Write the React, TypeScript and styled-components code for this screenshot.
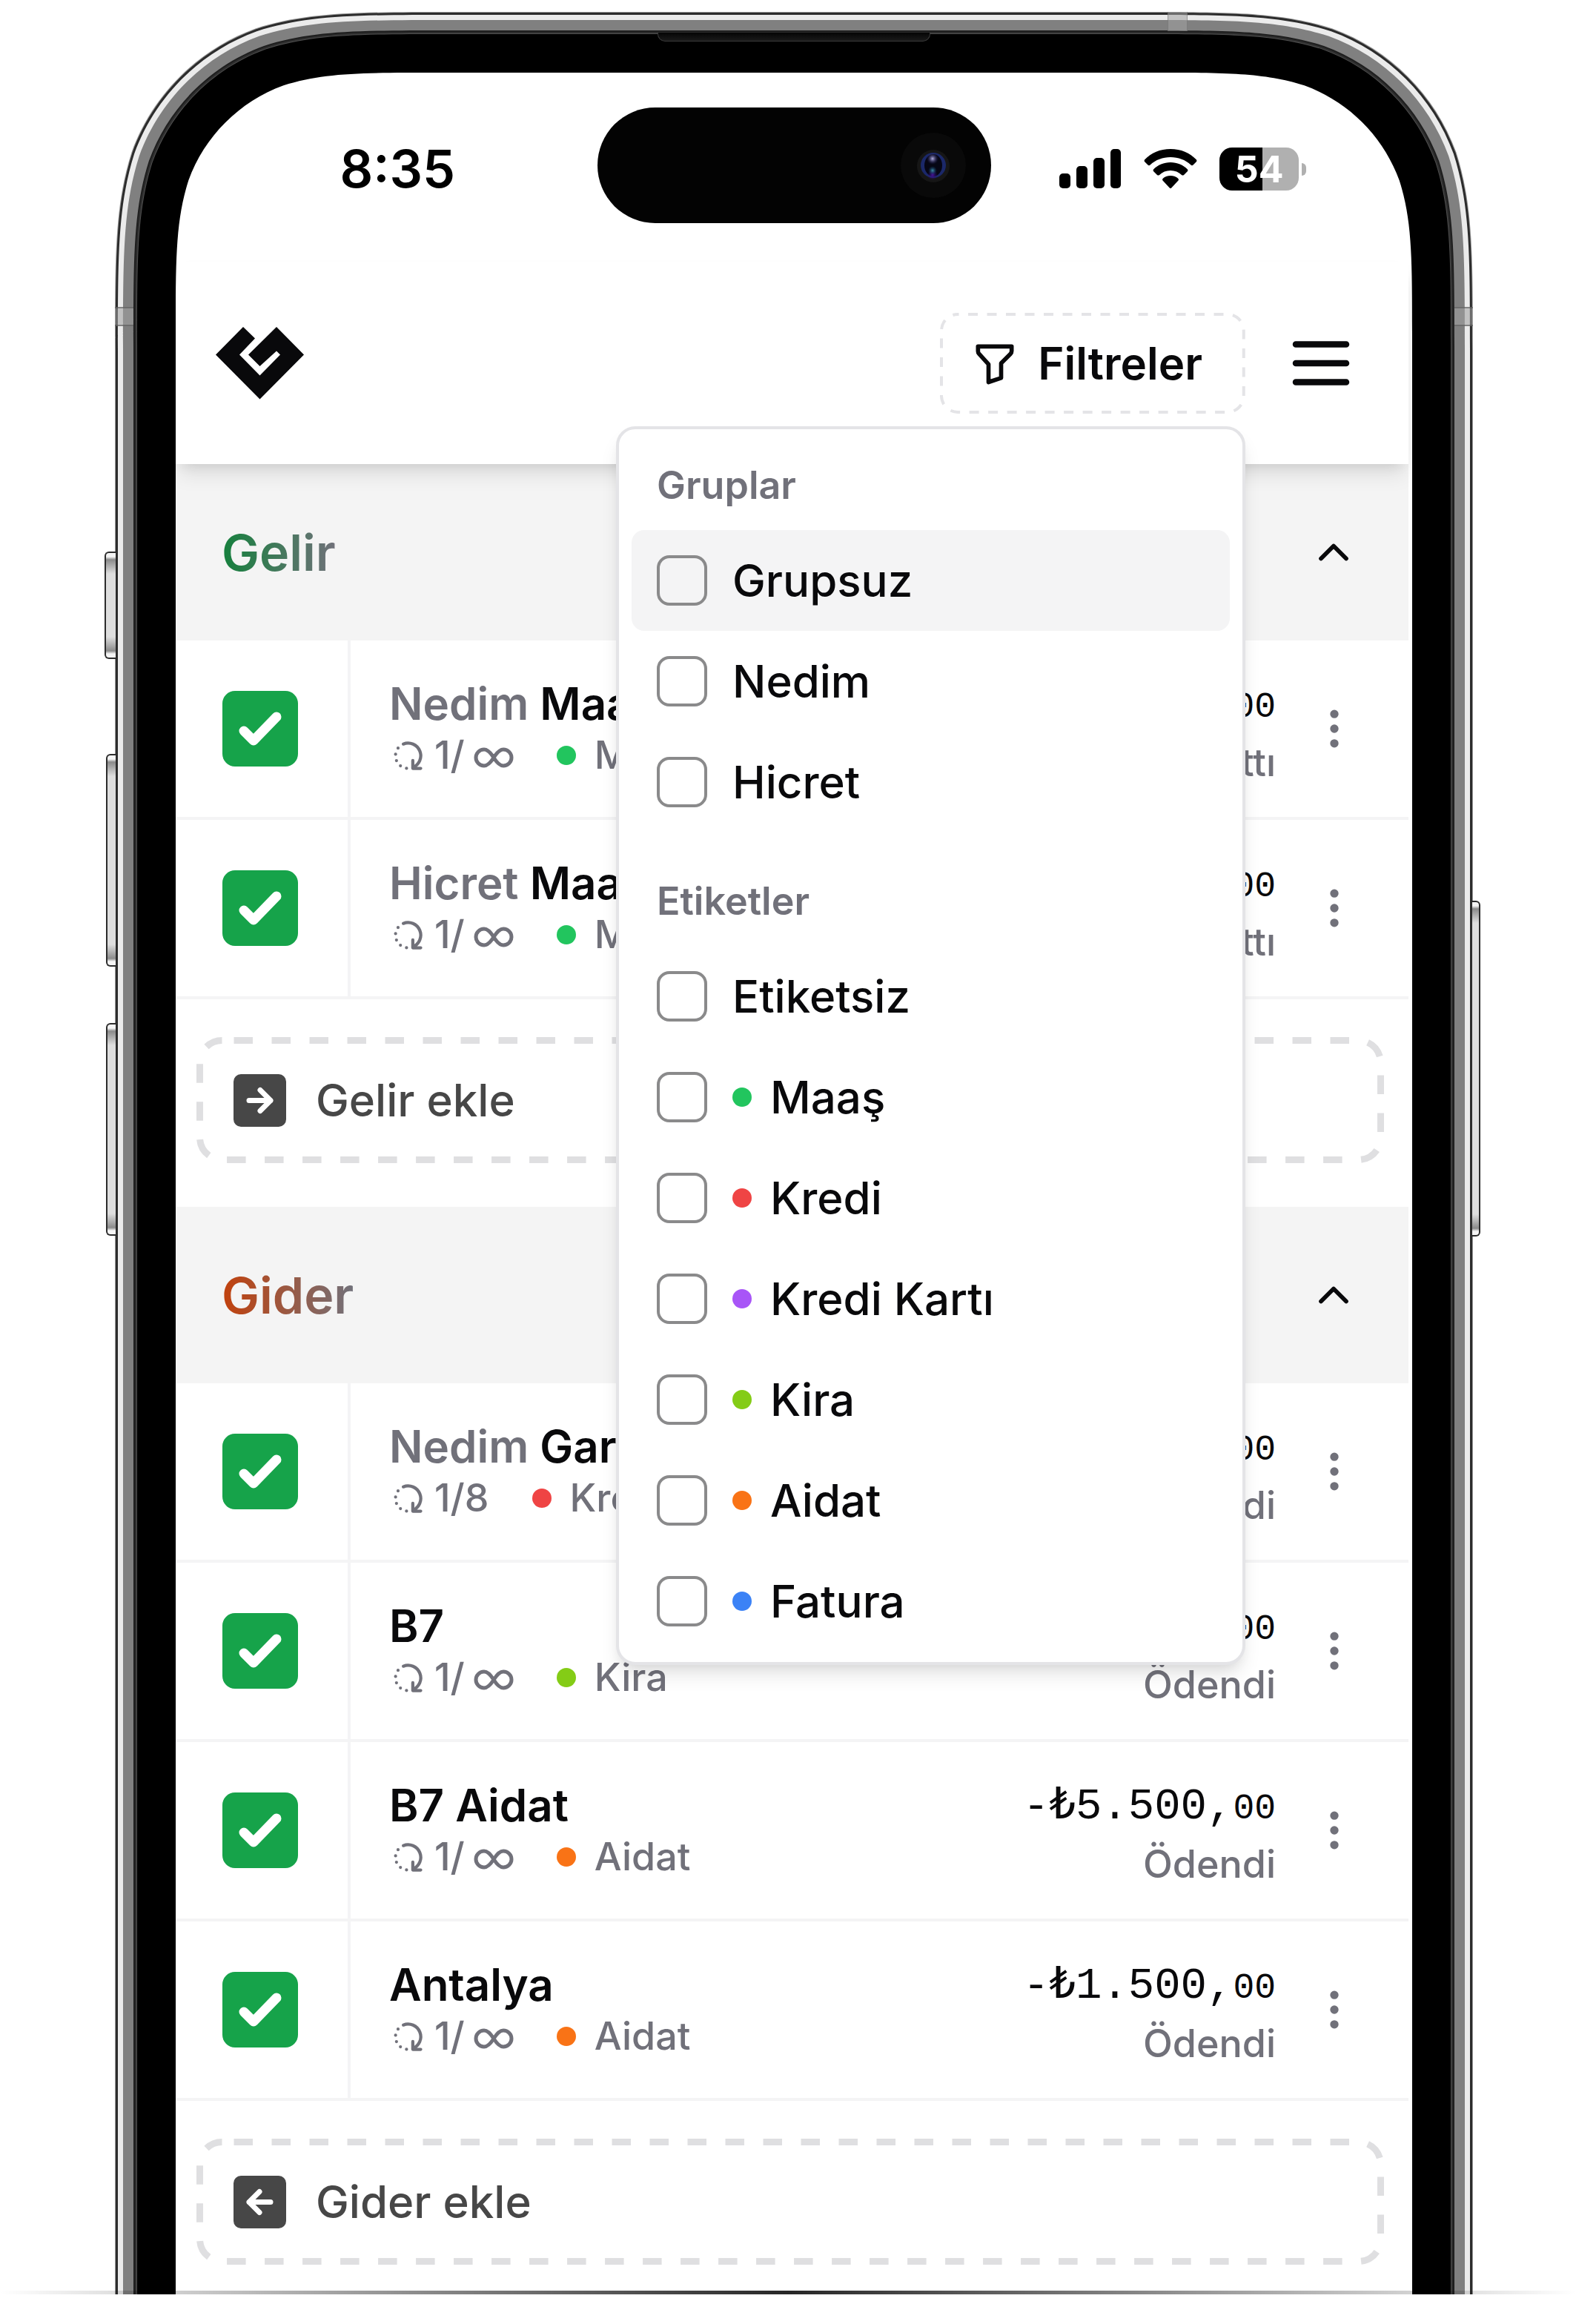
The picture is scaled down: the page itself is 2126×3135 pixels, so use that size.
import React, { useId, useState } from "react";
import styled, { createGlobalStyle } from "styled-components";

const sans = `Inter, "Noto Sans", sans-serif`;
const mono = `"Liberation Mono", "DejaVu Sans Mono", monospace`;
const ink = "#09090b";
const muted = "#71717a";
const line = "#f4f4f5";

const GlobalStyle = createGlobalStyle`
  *, *::before, *::after { box-sizing: border-box; }
  body { margin: 0; background: #fff; font-family: ${sans}; color: ${ink}; }
  button { font: inherit; color: inherit; background: none; border: 0; padding: 0; cursor: pointer; }
  h2, h3, ul, p { margin: 0; padding: 0; list-style: none; font: inherit; }
  svg { display: block; flex: none; }
`;

/* ---------- device ---------- */

/* Bezel rings: distance from the outer edge and colour, outermost first. */
const rings: [number, string][] = [
  [0, "#9a9a9a"],
  [1, "#2c2c2c"],
  [4, "#ebebeb"],
  [11, "#808080"],
  [25, "#1e1e1e"],
  [27, "#2e2e2e"],
  [29, "#505050"],
  [30, "#000"],
];
const bezel = 82;

const Stage = styled.main`
  position: relative;
  overflow: hidden;
  padding: 16px 139px 0 155px;
`;

const Phone = styled.div`
  position: relative;
  margin-bottom: -82px;
  padding: ${bezel}px;
  background: #000;
  box-shadow: ${rings
    .slice(0, -1)
    .map(([, color], i) => `inset 0 0 0 ${rings[i + 1][0]}px ${color}`)
    .join(", ")};
`;

const CornerArt = styled.svg<{ $side: "left" | "right" }>`
  position: absolute;
  top: 0;
  ${(p) => p.$side}: 0;
  transform: scaleX(${(p) => (p.$side === "left" ? 1 : -1)});
  pointer-events: none;
`;

const SideKey = styled.span<{ $side: "left" | "right"; $top: number; $height: number; $depth: number }>`
  position: absolute;
  top: ${(p) => p.$top}px;
  height: ${(p) => p.$height}px;
  width: ${(p) => p.$depth}px;
  ${(p) => p.$side}: ${(p) => -p.$depth + 1}px;
  border: 2px solid #2c2c2c;
  border-${(p) => (p.$side === "left" ? "right" : "left")}: 0;
  border-radius: ${(p) => (p.$side === "left" ? "6px 0 0 6px" : "0 6px 6px 0")};
  background: linear-gradient(#f5f5f5, #f5f5f5 5px, #8a8a8a 9px, #dedede 28px, #dedede calc(100% - 28px), #8a8a8a calc(100% - 9px), #f5f5f5 calc(100% - 5px));
`;

const Antenna = styled.span<{ $at: "left" | "right" | "top" }>`
  position: absolute;
  background: rgba(160, 160, 160, 0.55);
  ${(p) =>
    p.$at === "top"
      ? "top: 0; right: 385px; width: 27px; height: 26px; border: solid rgba(90,90,90,.4); border-width: 0 1px;"
      : `top: 398px; ${p.$at}: 0; width: 25px; height: 26px; border: solid rgba(70,70,70,.5); border-width: 2px 0;`}
`;

const Earpiece = styled.span`
  position: absolute;
  top: 28px;
  left: 50%;
  width: 368px;
  height: 12px;
  margin-left: -184px;
  background: linear-gradient(#050505, #1a1a1a);
  border: solid #3a3a3a;
  border-width: 0 1px 1px;
  border-radius: 0 0 10px 10px;
`;

const Screen = styled.div`
  position: relative;
  z-index: 0;
  overflow: hidden;
  background: #fff;
  padding: 0 5px 40px 0;
`;

const Ground = styled.div`
  position: absolute;
  left: 0;
  right: 0;
  bottom: 0;
  height: 5px;
  background: linear-gradient(90deg, rgba(0, 0, 0, 0), rgba(0, 0, 0, 0.85) 50%, rgba(0, 0, 0, 0));
`;

/* ---------- status bar ---------- */

const StatusBar = styled.div`
  display: grid;
  grid-template-columns: 1fr 531px 1fr;
  align-items: center;
  height: 256px;
  padding-top: 4px;
  margin-right: -5px;
`;

const Clock = styled.time`
  padding-left: 30px;
  text-align: center;
  font-size: 70px;
  font-weight: 600;
  line-height: 84px;
  color: #000;
`;

const Island = styled.div`
  display: flex;
  align-items: center;
  justify-content: flex-end;
  height: 156px;
  margin-bottom: 10px;
  padding-right: 34px;
  border-radius: 78px;
  background: #030303;
`;

const StatusIcons = styled.div`
  display: flex;
  align-items: center;
  justify-content: center;
  gap: 30px;
  padding-right: 50px;
`;

const Battery = styled.div`
  display: flex;
  align-items: center;
  gap: 4px;
`;

const BatteryBody = styled.span`
  width: 107px;
  height: 58px;
  border-radius: 17px;
  background: linear-gradient(90deg, #000 54%, #b0b0b0 54%);
  color: #fff;
  font-size: 50px;
  font-weight: 700;
  line-height: 58px;
  text-align: center;
`;

const BatteryCap = styled.span`
  width: 6px;
  height: 17px;
  border-radius: 0 8px 8px 0;
  background: #b0b0b0;
`;

/* ---------- header ---------- */

const Header = styled.header`
  position: relative;
  z-index: 2;
  display: flex;
  align-items: center;
  justify-content: space-between;
  padding: 68px 67px 68px 54px;
  background: #fff;
  box-shadow: 0 17px 26px -4px rgba(0, 0, 0, 0.1), 0 9px 17px -9px rgba(0, 0, 0, 0.1);
`;

const HeaderActions = styled.div`
  display: flex;
  align-items: center;
  gap: 51px;
`;

const FilterAnchor = styled.div`
  position: relative;
`;

const DashedButton = styled.button`
  position: relative;
  display: flex;
  align-items: center;
`;

const FilterButton = styled(DashedButton)`
  gap: 24px;
  height: 136px;
  padding: 0 58px 0 40px;
  font-size: 60px;
  font-weight: 600;
  line-height: 68px;
`;

const DashFrame = styled.svg<{ $weight: number }>`
  position: absolute;
  inset: 0;
  width: 100%;
  height: 100%;
  rect {
    x: ${(p) => p.$weight / 2}px;
    y: ${(p) => p.$weight / 2}px;
    width: calc(100% - ${(p) => p.$weight}px);
    height: calc(100% - ${(p) => p.$weight}px);
    fill: none;
    stroke-width: ${(p) => p.$weight}px;
  }
`;

const Popover = styled.div`
  position: absolute;
  top: calc(100% + 17px);
  right: 0;
  width: 849px;
  padding: 17px 17px 14px;
  border: 4px solid #e4e4e7;
  border-radius: 26px;
  background: #fff;
  box-shadow: 0 17px 26px -4px rgba(0, 0, 0, 0.1), 0 9px 17px -9px rgba(0, 0, 0, 0.1);
`;

const FilterGroup = styled.div`
  & + & {
    margin-top: 34px;
  }
`;

const GroupTitle = styled.h3`
  padding: 25px 34px 26px;
  font-size: 52px;
  font-weight: 600;
  line-height: 68px;
  color: ${muted};
`;

const FilterOption = styled.label<{ $active?: boolean }>`
  display: flex;
  align-items: center;
  gap: 34px;
  height: 136px;
  padding: 0 34px;
  border-radius: 17px;
  background: ${(p) => (p.$active ? "#f4f4f5" : "transparent")};
  font-size: 60px;
  font-weight: 500;
  line-height: 68px;
`;

const OptionBox = styled.input`
  appearance: none;
  flex: none;
  width: 68px;
  height: 68px;
  margin: 0;
  border: 4px solid #8a8a8b;
  border-radius: 17px;
  &:checked {
    background: #16a34a;
    border-color: #16a34a;
  }
`;

const OptionName = styled.span`
  display: flex;
  align-items: center;
  gap: 25px;
`;

const Dot = styled.span<{ $color: string }>`
  flex: none;
  width: 26px;
  height: 26px;
  border-radius: 50%;
  background: ${(p) => p.$color};
`;

/* ---------- ledger ---------- */

const SectionHead = styled.div`
  display: flex;
  align-items: center;
  justify-content: space-between;
  height: 238px;
  padding: 0 67px 0 62px;
  background: #f4f4f4;
`;

const SectionTitle = styled.h2<{ $from: string }>`
  font-size: 68px;
  font-weight: 600;
  line-height: 84px;
  color: transparent;
  background: linear-gradient(90deg, ${(p) => p.$from}, ${muted});
  background-clip: text;
  -webkit-background-clip: text;
`;

const Row = styled.li`
  display: grid;
  grid-template-columns: 236px 1fr auto 179px;
  height: 242px;
  border-bottom: 4px solid ${line};
`;

const DoneCell = styled.label`
  position: relative;
  display: flex;
  align-items: center;
  padding-left: 63px;
  border-right: 4px solid ${line};
  svg {
    position: absolute;
    pointer-events: none;
  }
`;

const DoneBox = styled.input`
  appearance: none;
  width: 102px;
  height: 102px;
  margin: 0;
  border-radius: 17px;
  border: 4px solid #8a8a8b;
  &:checked {
    background: #16a34a;
    border: 0;
  }
`;

const Details = styled.div`
  display: flex;
  flex-direction: column;
  justify-content: center;
  padding: 4px 0 0 52px;
  white-space: nowrap;
`;

const Name = styled.p`
  font-size: 60px;
  font-weight: 600;
  line-height: 68px;
`;

const Owner = styled.span`
  color: ${muted};
`;

const Meta = styled.p`
  display: flex;
  align-items: center;
  font-size: 52px;
  font-weight: 500;
  line-height: 72px;
  color: ${muted};
`;

const Count = styled.span`
  display: flex;
  align-items: center;
  gap: 12px;
  margin: 0 58px 0 10px;
`;

const Tag = styled.span`
  display: flex;
  align-items: center;
  gap: 25px;
`;

const Amount = styled.div`
  padding-top: 50px;
  text-align: right;
`;

const Price = styled.p`
  font-family: ${mono};
  font-size: 59px;
  line-height: 76px;
`;

const Cents = styled.span`
  font-size: 48px;
`;

const State = styled.p`
  font-size: 52px;
  font-weight: 500;
  line-height: 74px;
  color: ${muted};
`;

const MoreButton = styled.button`
  display: flex;
  align-items: center;
  justify-content: center;
  padding-right: 22px;
  color: ${muted};
`;

const AddArea = styled.div`
  padding: 51px 33px 59px 28px;
  &:last-child {
    padding-bottom: 0;
  }
`;

const AddButton = styled(DashedButton)`
  gap: 40px;
  width: 100%;
  height: 170px;
  padding: 0 50px;
  font-size: 60px;
  font-weight: 500;
  line-height: 68px;
  color: #474747;
`;

/* ---------- drawings ---------- */

/* Outline of one continuous-curvature corner, inset by d from the phone's outer edge. */
const cornerSize = 475;
const cornerPath = (d: number) => {
  const r = 300 - d * 0.85;
  const p = (x: number, y: number) => `${(d + x * r).toFixed(2)} ${(d + y * r).toFixed(2)}`;
  return [
    `M${d} ${cornerSize}L${p(0, 1.528665)}`,
    `C${p(0, 1.088493)} ${p(0, 0.868407)} ${p(0.074911, 0.631494)}`,
    `C${p(0.169060, 0.372824)} ${p(0.372824, 0.169060)} ${p(0.631494, 0.074911)}`,
    `C${p(0.868407, 0)} ${p(1.088493, 0)} ${p(1.528665, 0)}`,
    `L${cornerSize} ${d}V${cornerSize}Z`,
  ].join("");
};

const Corner = ({ side }: { side: "left" | "right" }) => (
  <CornerArt $side={side} width={cornerSize} height={cornerSize} viewBox={`0 0 ${cornerSize} ${cornerSize}`} aria-hidden="true">
    <path fillRule="evenodd" fill="#fff" d={`M0 0H${cornerSize}V${cornerSize}H0Z${cornerPath(2)}`} />
    {rings.map(([d, color], i) => {
      const inner = i + 1 < rings.length ? rings[i + 1][0] + 2 : bezel;
      return <path key={d} fillRule="evenodd" fill={color} d={cornerPath(d) + cornerPath(inner)} />;
    })}
  </CornerArt>
);

const Stroke = ({ size, children, width = 2 }: { size: number; children: React.ReactNode; width?: number }) => (
  <svg width={size} height={size} viewBox="0 0 24 24" fill="none" stroke="currentColor" strokeWidth={width} strokeLinecap="round" strokeLinejoin="round" aria-hidden="true">
    {children}
  </svg>
);

const Logo = () => (
  <svg width="119" height="98" viewBox="0 0 119 98" aria-label="Logo" role="img">
    <path fill={ink} d="M0 37.5 37 0 53 15.5 32 37.5 59.5 65.5 87 37.5 82 32.5 59.5 53 44 37.5 82 0 119 37.5 59.5 97.5Z" />
  </svg>
);

const Camera = () => (
  <svg width="88" height="88" viewBox="0 0 88 88" aria-hidden="true">
    <defs>
      <radialGradient id="glint"><stop offset="0" stopColor="#b9b6e6" /><stop offset="1" stopColor="#1d1a63" stopOpacity="0" /></radialGradient>
      <radialGradient id="teal"><stop offset="0" stopColor="#3f8fae" /><stop offset="1" stopColor="#0d3a66" stopOpacity="0" /></radialGradient>
      <radialGradient id="violet"><stop offset="0" stopColor="#4a14a0" /><stop offset="1" stopColor="#2a0a66" stopOpacity="0" /></radialGradient>
    </defs>
    <circle cx="44" cy="44" r="44" fill="#090909" />
    <circle cx="44" cy="45" r="22" fill="#161616" />
    <circle cx="44" cy="44" r="17" fill="#1b2869" />
    <ellipse cx="44" cy="44" rx="12" ry="15" fill="#060614" />
    <circle cx="43" cy="35" r="8" fill="url(#glint)" />
    <circle cx="43" cy="57" r="7" fill="url(#violet)" />
    <circle cx="43" cy="51" r="6" fill="url(#teal)" />
  </svg>
);

const Signal = () => (
  <svg width="84" height="54" viewBox="0 0 84 54" aria-hidden="true">
    <rect x="0" y="33" width="15" height="20" rx="5" />
    <rect x="23" y="23" width="15" height="30" rx="5" />
    <rect x="46" y="12" width="15" height="41" rx="5" />
    <rect x="69" y="0" width="14" height="53" rx="5" />
  </svg>
);

const Wifi = () => (
  <svg width="72" height="54" viewBox="0 0 72 54" aria-hidden="true">
    <path d="M36 0C50 0 62 5 71 14.500Q72 16 71 17L66.500 21.500Q65 23 63.500 21.500C56 14.500 46.500 11 36 11S16 14.500 8.500 21.500Q7 23 5.500 21.500L1 17Q0 16 1 14.500C10 5 22 0 36 0Z" />
    <path d="M36 18C45 18 53 21.500 59 27.500Q60 29 59 30L54 35Q52.500 36 51 35C47 31 42 29 36 29S25 31 21 35Q19.500 36 18 35L13 30Q12 29 13 27.500C19 21.500 27 18 36 18Z" />
    <path d="M36 36C40 36 44 37.500 46.500 40Q47.500 41.500 46.500 42.500L37.200 52.500Q36 53.500 34.800 52.500L25.500 42.500Q24.500 41.500 25.500 40C28 37.500 32 36 36 36Z" />
  </svg>
);

const FilterIcon = () => (
  <Stroke size={68}>
    <path d="M4 4h16v2.172a2 2 0 0 1 -.586 1.414l-4.414 4.414v7l-6 2v-8.5l-4.480 -4.928a2 2 0 0 1 -.520 -1.345v-2.227z" />
  </Stroke>
);

const RepeatIcon = () => (
  <Stroke size={51}>
    <path d="M9 4.550a8 8 0 0 1 6 14.900m0 -4.450v5h5" />
    <path d="M5.630 7.160v.010M4.060 11v.010M4.630 15.100v.010M7.160 18.370v.010M11 19.940v.010" />
  </Stroke>
);

const InfinityIcon = () => (
  <svg width="54" height="34" viewBox="0 0 54 34" fill="none" stroke="currentColor" strokeWidth="5" aria-label="sonsuz" role="img">
    <path d="M27 20C22 12 18 9 14 9a11 11 0 0 0 0 22C18 31 22 28 27 20S36 9 40 9a11 11 0 0 1 0 22C36 31 32 28 27 20Z" />
  </svg>
);

const CheckMark = () => (
  <svg width="102" height="102" viewBox="0 0 102 102" fill="none" stroke="#fff" strokeWidth="13" strokeLinecap="round" strokeLinejoin="round" aria-hidden="true">
    <path d="M29 54 42 67 73 35" />
  </svg>
);

const ArrowTile = ({ back }: { back?: boolean }) => (
  <svg width="71" height="71" viewBox="0 0 71 71" aria-hidden="true">
    <rect width="71" height="71" rx="10" fill="#474747" />
    <path d={back ? "M50 35.500H21M35 21.500 21 35.500 35 49.500" : "M21 35.500H50M36 21.500 50 35.500 36 49.500"} fill="none" stroke="#fff" strokeWidth="7" strokeLinecap="round" strokeLinejoin="round" />
  </svg>
);

/* ---------- data ---------- */

const colors: Record<string, string> = {
  Maaş: "#22c55e",
  Kredi: "#ef4444",
  "Kredi Kartı": "#a855f7",
  Kira: "#84cc16",
  Aidat: "#f97316",
  Fatura: "#3b82f6",
};

type Entry = { owner?: string; name: string; total?: number; tag: string; amount: string; state: string };

const income: Entry[] = [
  { owner: "Nedim", name: "Maaş", tag: "Maaş", amount: "₺50.000", state: "Yattı" },
  { owner: "Hicret", name: "Maaş", tag: "Maaş", amount: "₺40.000", state: "Yattı" },
];

const expenses: Entry[] = [
  { owner: "Nedim", name: "Garanti", total: 8, tag: "Kredi", amount: "-₺9.000", state: "Ödendi" },
  { name: "B7", tag: "Kira", amount: "-₺20.000", state: "Ödendi" },
  { name: "B7 Aidat", tag: "Aidat", amount: "-₺5.500", state: "Ödendi" },
  { name: "Antalya", tag: "Aidat", amount: "-₺1.500", state: "Ödendi" },
];

const filters = [
  { title: "Gruplar", options: ["Grupsuz", "Nedim", "Hicret"] },
  { title: "Etiketler", options: ["Etiketsiz", ...Object.keys(colors)] },
];

/* ---------- parts ---------- */

function EntryRow({ entry }: { entry: Entry }) {
  const [done, setDone] = useState(true);
  return (
    <Row>
      <DoneCell>
        <DoneBox type="checkbox" checked={done} onChange={() => setDone(!done)} aria-label={entry.name} />
        {done && <CheckMark />}
      </DoneCell>
      <Details>
        <Name>
          {entry.owner && <Owner>{entry.owner} </Owner>}
          {entry.name}
        </Name>
        <Meta>
          <RepeatIcon />
          <Count>
            {entry.total ? `1/${entry.total}` : <>1/<InfinityIcon /></>}
          </Count>
          <Tag>
            <Dot $color={colors[entry.tag]} />
            {entry.tag}
          </Tag>
        </Meta>
      </Details>
      <Amount>
        <Price>
          {entry.amount},<Cents>00</Cents>
        </Price>
        <State>{entry.state}</State>
      </Amount>
      <MoreButton aria-label="Seçenekler">
        <Stroke size={68}>
          <circle cx="12" cy="5" r="1" />
          <circle cx="12" cy="12" r="1" />
          <circle cx="12" cy="19" r="1" />
        </Stroke>
      </MoreButton>
    </Row>
  );
}

function Section({ title, from, entries, addLabel, back }: { title: string; from: string; entries: Entry[]; addLabel: string; back?: boolean }) {
  return (
    <>
      <SectionHead>
        <SectionTitle $from={from}>{title}</SectionTitle>
        <button aria-label="Daralt">
          <Stroke size={68}>
            <path d="M6 15l6 -6l6 6" />
          </Stroke>
        </button>
      </SectionHead>
      <ul>
        {entries.map((entry, i) => (
          <EntryRow key={i} entry={entry} />
        ))}
      </ul>
      <AddArea>
        <AddButton>
          <DashFrame $weight={9} aria-hidden="true">
            <rect rx="30" stroke="#dfdfe1" strokeDasharray="25.500 25.500" strokeDashoffset="-16" />
          </DashFrame>
          <ArrowTile back={back} />
          {addLabel}
        </AddButton>
      </AddArea>
    </>
  );
}

function FilterMenu() {
  const base = useId();
  return (
    <Popover>
      {filters.map((group) => (
        <FilterGroup key={group.title} role="group" aria-label={group.title}>
          <GroupTitle>{group.title}</GroupTitle>
          {group.options.map((name) => (
            <FilterOption key={name} htmlFor={base + name} $active={name === "Grupsuz"}>
              <OptionBox id={base + name} type="checkbox" />
              <OptionName>
                {colors[name] && <Dot $color={colors[name]} />}
                {name}
              </OptionName>
            </FilterOption>
          ))}
        </FilterGroup>
      ))}
    </Popover>
  );
}

export default function App() {
  return (
    <>
      <GlobalStyle />
      <Stage>
        <Phone>
          <Screen>
            <StatusBar>
              <Clock>8:35</Clock>
              <Island>
                <Camera />
              </Island>
              <StatusIcons>
                <Signal />
                <Wifi />
                <Battery>
                  <BatteryBody>54</BatteryBody>
                  <BatteryCap />
                </Battery>
              </StatusIcons>
            </StatusBar>
            <Header>
              <Logo />
              <HeaderActions>
                <FilterAnchor>
                  <FilterButton aria-expanded="true">
                    <DashFrame $weight={4} aria-hidden="true">
                      <rect rx="22" stroke="#e4e4e7" strokeDasharray="13 12.500" strokeDashoffset="-14" />
                    </DashFrame>
                    <FilterIcon />
                    Filtreler
                  </FilterButton>
                  <FilterMenu />
                </FilterAnchor>
                <button aria-label="Menü">
                  <Stroke size={102}>
                    <path d="M4 6h16M4 12h16M4 18h16" />
                  </Stroke>
                </button>
              </HeaderActions>
            </Header>
            <Section title="Gelir" from="#15803d" entries={income} addLabel="Gelir ekle" />
            <Section title="Gider" from="#c2410c" entries={expenses} addLabel="Gider ekle" back />
          </Screen>
          <Corner side="left" />
          <Corner side="right" />
          <SideKey $side="left" $top={728} $height={145} $depth={15} />
          <SideKey $side="left" $top={1001} $height={287} $depth={13} />
          <SideKey $side="left" $top={1364} $height={287} $depth={13} />
          <SideKey $side="right" $top={1199} $height={453} $depth={11} />
          <Antenna $at="left" />
          <Antenna $at="right" />
          <Antenna $at="top" />
          <Earpiece />
        </Phone>
        <Ground />
      </Stage>
    </>
  );
}
